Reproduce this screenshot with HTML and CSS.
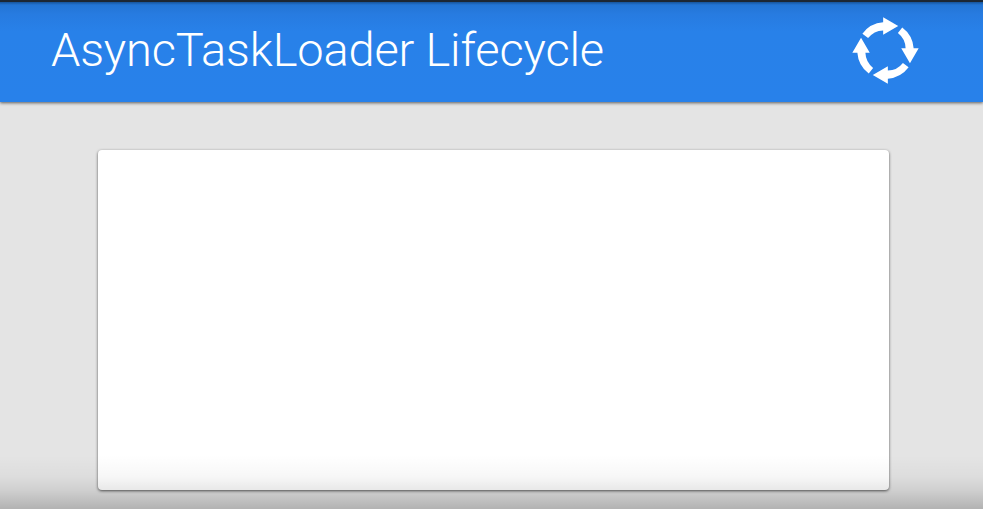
FILE: index.html
```
<!DOCTYPE html>
<html lang="en">
<head>
<meta charset="utf-8">
<title>AsyncTaskLoader Lifecycle</title>
<link rel="stylesheet" href="styles.css">
</head>
<body>
<div class="slide">
  <header class="bar">
    <h1 class="title">AsyncTaskLoader Lifecycle</h1>
    <svg class="cycle" viewBox="36 37 200 200" aria-hidden="true">
      <defs><path id="arrow" d="M67 87A85 85 0 0 1 129 53V38L174 64L129 90V77A60 60 0 0 0 84 100Z"/></defs>
      <use href="#arrow"/>
      <use href="#arrow" transform="rotate(90 136 137)"/>
      <use href="#arrow" transform="rotate(180 136 137)"/>
      <use href="#arrow" transform="rotate(270 136 137)"/>
    </svg>
  </header>
  <main class="content">
    <section class="card"></section>
  </main>
</div>
</body>
</html>
```
FILE: styles.css
```
* { box-sizing: border-box; }
body { margin: 0; overflow: hidden; }
.slide {
  position: relative;
  display: flex;
  flex-direction: column;
  width: 983px;
  height: 509px;
  background: #e4e4e4;
}
.bar {
  display: flex;
  justify-content: space-between;
  align-items: center;
  height: 102px;
  padding: 0 64px 4px 51px;
  border-top: 2px solid #1c2733;
  background: linear-gradient(#16549a 0, #2375d4 3px, #277be0 12px, #2881e9 30px, #2881ea 100%);
  box-shadow: 0 1px 3px rgba(0, 0, 0, 0.6);
}
.title {
  margin: 0;
  font: 300 47px/60px Roboto, sans-serif;
  letter-spacing: -0.17px;
  color: #fff;
  white-space: nowrap;
}
.cycle {
  width: 67px;
  height: 67px;
  fill: #fff;
}
.content {
  flex: 1;
  padding: 48px 94px 19px 98px;
}
.card {
  height: 340px;
  border-radius: 4px;
  background: #fff;
  box-shadow: 0 1px 3px rgba(0, 0, 0, 0.65);
}
.slide::after {
  content: "";
  position: absolute;
  inset: auto 0 0;
  height: 54px;
  background: linear-gradient(rgba(0, 0, 0, 0), rgba(0, 0, 0, 0.03) 40%, rgba(0, 0, 0, 0.09) 65%, rgba(0, 0, 0, 0.22));
}
```
